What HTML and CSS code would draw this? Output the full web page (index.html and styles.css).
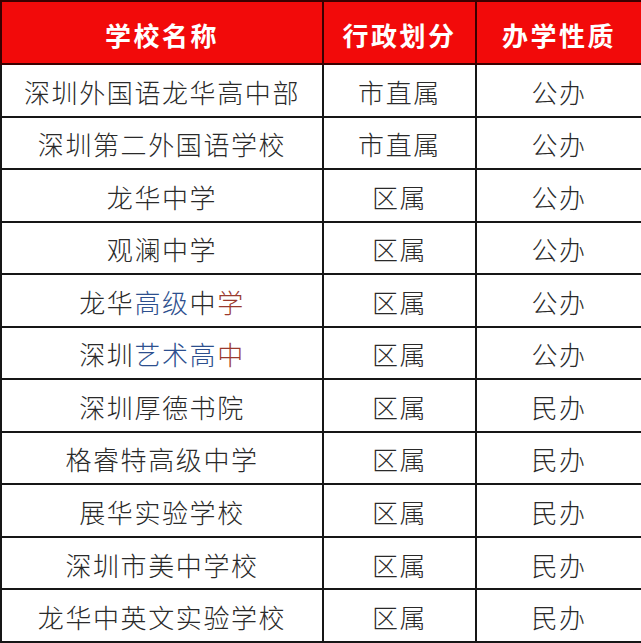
FILE: index.html
```html
<!DOCTYPE html>
<html lang="zh-CN">
<head>
<meta charset="utf-8">
<title>学校列表</title>
<link rel="stylesheet" href="styles.css">
</head>
<body>
<table class="schools">
  <colgroup>
    <col class="c1"><col class="c2"><col class="c3">
  </colgroup>
  <thead>
    <tr><th>学校名称</th><th>行政划分</th><th>办学性质</th></tr>
  </thead>
  <tbody>
    <tr><td>深圳外国语龙华高中部</td><td>市直属</td><td>公办</td></tr>
    <tr><td>深圳第二外国语学校</td><td>市直属</td><td>公办</td></tr>
    <tr><td>龙华中学</td><td>区属</td><td>公办</td></tr>
    <tr><td>观澜中学</td><td>区属</td><td>公办</td></tr>
    <tr><td>龙华<span class="blue">高级</span>中<span class="red">学</span></td><td>区属</td><td>公办</td></tr>
    <tr><td>深圳<span class="blue">艺术高</span><span class="red">中</span></td><td>区属</td><td>公办</td></tr>
    <tr><td>深圳厚德书院</td><td>区属</td><td>民办</td></tr>
    <tr><td>格睿特高级中学</td><td>区属</td><td>民办</td></tr>
    <tr><td>展华实验学校</td><td>区属</td><td>民办</td></tr>
    <tr><td>深圳市美中学校</td><td>区属</td><td>民办</td></tr>
    <tr><td>龙华中英文实验学校</td><td>区属</td><td>民办</td></tr>
  </tbody>
</table>
</body>
</html>
```

FILE: styles.css
```css
html, body {
  margin: 0;
  padding: 0;
  background: #ffffff;
}
.schools {
  width: 641px;
  height: 643px;
  border-collapse: collapse;
  table-layout: fixed;
  font-family: "Noto Sans CJK SC", "Noto Sans", sans-serif;
}
.c1 { width: 322px; }
.c2 { width: 153px; }
.c3 { width: 166px; }
.schools th,
.schools td {
  border: 2px solid #161616;
  text-align: center;
  padding: 0;
  letter-spacing: 1.6px;
  line-height: 30px;
}
.schools th {
  height: 57px;
  padding-top: 4px;
  background: #f20a0a;
  color: #ffffff;
  font-size: 26px;
  font-weight: 700;
  letter-spacing: 2.5px;
  border-color: #3a0000;
}
.schools td {
  height: 47.5px;
  color: #2a2a2a;
  font-size: 26px;
  font-weight: 300;
  padding-top: 3px;
}
.blue { color: #2d4f8e; }
.red { color: #9a3a2e; }
```
